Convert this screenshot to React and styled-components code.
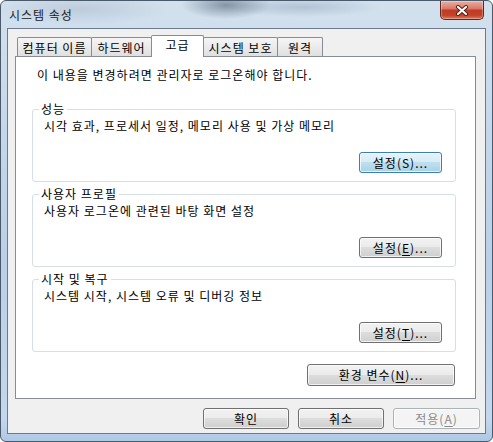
import React from 'react';
import styled, { createGlobalStyle } from 'styled-components';

const GlobalStyle = createGlobalStyle`
  html, body {
    margin: 0;
    padding: 0;
    background: #fff;
  }
  body {
    font-family: "Noto Sans CJK KR", "Noto Sans", sans-serif;
    font-size: 12px;
    letter-spacing: 1px;
    color: #000;
  }
`;

const Window = styled.div`
  box-sizing: border-box;
  width: 493px;
  height: 442px;
  display: flex;
  flex-direction: column;
  padding: 0 6px 7px 6px;
  border: 1px solid #4b5a6b;
  border-radius: 6px;
  background:
    radial-gradient(ellipse 45px 14px at 225px 4px, rgba(70, 88, 110, 0.55), transparent),
    radial-gradient(ellipse 80px 10px at 300px 6px, rgba(120, 140, 165, 0.35), transparent),
    radial-gradient(ellipse 90px 16px at 80px 8px, rgba(150, 165, 185, 0.35), transparent),
    linear-gradient(180deg, #d3e1ee 0%, #c4d7ea 30%, #b9d0e8 60%, #c3d8ee 95%, #aec8e4 100%);
`;

const TitleBar = styled.div`
  height: 27px;
  display: flex;
  justify-content: space-between;
  padding-left: 2px;
`;

const Title = styled.span`
  align-self: center;
  font-size: 12px;
  line-height: 14px;
  color: #1a1a1a;
`;

const CloseButton = styled.div`
  box-sizing: border-box;
  width: 44px;
  height: 19px;
  margin-right: 2px;
  display: flex;
  align-items: center;
  justify-content: center;
  border: 1px solid #5a2a22;
  border-top: none;
  border-radius: 0 0 5px 5px;
  background: linear-gradient(180deg, #eab0a3 0%, #d9786a 42%, #c03b22 52%, #c2442a 80%, #e07a55 100%);
  box-shadow: inset 0 0 0 1px rgba(255, 255, 255, 0.3);
`;

const Client = styled.div`
  flex: 1;
  display: flex;
  flex-direction: column;
  background: #f0f0f0;
  border: 1px solid #6b7b8d;
  padding-top: 6px;
`;

const TabRow = styled.div`
  position: relative;
  z-index: 1;
  display: flex;
  align-items: flex-end;
  height: 21px;
  margin-left: 9px;
`;

const Tab = styled.div`
  box-sizing: border-box;
  width: ${p => p.$w}px;
  height: ${p => (p.$active ? 22 : 19)}px;
  margin-bottom: ${p => (p.$active ? -1 : 0)}px;
  & + & {
    margin-left: -1px;
  }
  display: flex;
  align-items: center;
  justify-content: center;
  padding: ${p => (p.$active ? '0 0 3px 0' : '1px 0 0 0')};
  border: 1px solid #898c95;
  border-bottom: none;
  border-radius: 2px 2px 0 0;
  background: ${p =>
    p.$active ? '#fff' : 'linear-gradient(180deg, #f5f5f5 0%, #ebebeb 50%, #dfdfdf 100%)'};
  position: relative;
  z-index: ${p => (p.$active ? 2 : 1)};
  line-height: 14px;
  white-space: nowrap;
`;

const Panel = styled.div`
  box-sizing: border-box;
  height: 343px;
  margin: 0 9px 0 7px;
  padding: 11px 19px 12px 16px;
  display: flex;
  flex-direction: column;
  background: #fff;
  border: 1px solid #898c95;
`;

const Notice = styled.div`
  line-height: 14px;
  padding-left: 5px;
  margin-bottom: 20px;
  white-space: nowrap;
`;

const Group = styled.fieldset`
  margin: 0;
  min-width: 0;
  padding: 0 13px 8px 11px;
  display: flex;
  flex-direction: column;
  border: 1px solid #d5dfe5;
  border-radius: 3px;
  & + & {
    margin-top: 5px;
  }
`;

const Legend = styled.legend`
  margin-left: -5px;
  padding: 0 2px;
  line-height: 14px;
  font-size: 12px;
`;

const Description = styled.div`
  margin-top: 3px;
  line-height: 14px;
  white-space: nowrap;
`;

const Button = styled.button`
  box-sizing: border-box;
  width: ${p => p.$w}px;
  height: ${p => p.$h || 21}px;
  margin: ${p => p.$m || 0};
  padding: 0;
  flex-shrink: 0;
  align-self: ${p => p.$align || 'auto'};
  font-family: inherit;
  font-size: 12px;
  letter-spacing: 1px;
  line-height: 14px;
  color: ${p => (p.$variant === 'disabled' ? '#8a8a8a' : '#000')};
  border: 1px solid
    ${p => (p.$variant === 'default' ? '#3c7fb1' : p.$variant === 'disabled' ? '#adb2b5' : '#707070')};
  border-radius: 3px;
  background: ${p =>
    p.$variant === 'default'
      ? 'linear-gradient(180deg, #e6f3fa 0%, #d6ebf6 50%, #c0dfee 50%, #a9d2e8 100%)'
      : p.$variant === 'disabled'
      ? '#f4f4f4'
      : 'linear-gradient(180deg, #f2f2f2 0%, #ebebeb 50%, #dddddd 50%, #cfcfcf 100%)'};
  box-shadow: inset 0 0 0 1px rgba(255, 255, 255, 0.7);
  u {
    text-decoration-thickness: 1px;
    text-underline-offset: 2px;
  }
`;

const ButtonRow = styled.div`
  display: flex;
  justify-content: flex-end;
  gap: 9px;
  margin-top: 9px;
  padding-right: 5px;
`;

const groups = [
  {
    title: '성능',
    text: '시각 효과, 프로세서 일정, 메모리 사용 및 가상 메모리',
    key: 'S',
    variant: 'default',
    underline: false,
  },
  {
    title: '사용자 프로필',
    text: '사용자 로그온에 관련된 바탕 화면 설정',
    key: 'E',
    underline: true,
  },
  {
    title: '시작 및 복구',
    text: '시스템 시작, 시스템 오류 및 디버깅 정보',
    key: 'T',
    underline: true,
  },
];

const tabs = [
  { label: '컴퓨터 이름', w: 75 },
  { label: '하드웨어', w: 61 },
  { label: '고급', w: 53, active: true },
  { label: '시스템 보호', w: 75 },
  { label: '원격', w: 46 },
];

function CloseIcon() {
  return (
    <svg width="14" height="11" viewBox="0 0 14 11">
      <path d="M3 2 L11 9 M11 2 L3 9" stroke="#4a1c15" strokeWidth="4" strokeLinecap="round" />
      <path d="M3 2 L11 9 M11 2 L3 9" stroke="#fff" strokeWidth="2.2" strokeLinecap="round" />
    </svg>
  );
}

export default function App() {
  return (
    <>
      <GlobalStyle />
      <Window>
        <TitleBar>
          <Title>시스템 속성</Title>
          <CloseButton>
            <CloseIcon />
          </CloseButton>
        </TitleBar>
        <Client>
          <TabRow>
            {tabs.map(t => (
              <Tab key={t.label} $w={t.w} $active={t.active}>
                {t.label}
              </Tab>
            ))}
          </TabRow>
          <Panel>
            <Notice>이 내용을 변경하려면 관리자로 로그온해야 합니다.</Notice>
            {groups.map(g => (
              <Group key={g.title}>
                <Legend>{g.title}</Legend>
                <Description>{g.text}</Description>
                <Button $w={83} $align="flex-end" $m="19px 0 0 0" $variant={g.variant}>
                  설정({g.underline ? <u>{g.key}</u> : g.key})...
                </Button>
              </Group>
            ))}
            <Button $w={148} $h={22} $align="flex-end" $m="12px 1px 0 0">
              환경 변수(<u>N</u>)...
            </Button>
          </Panel>
          <ButtonRow>
            <Button $w={86}>확인</Button>
            <Button $w={86}>취소</Button>
            <Button $w={87} $variant="disabled">
              적용(<u>A</u>)
            </Button>
          </ButtonRow>
        </Client>
      </Window>
    </>
  );
}
